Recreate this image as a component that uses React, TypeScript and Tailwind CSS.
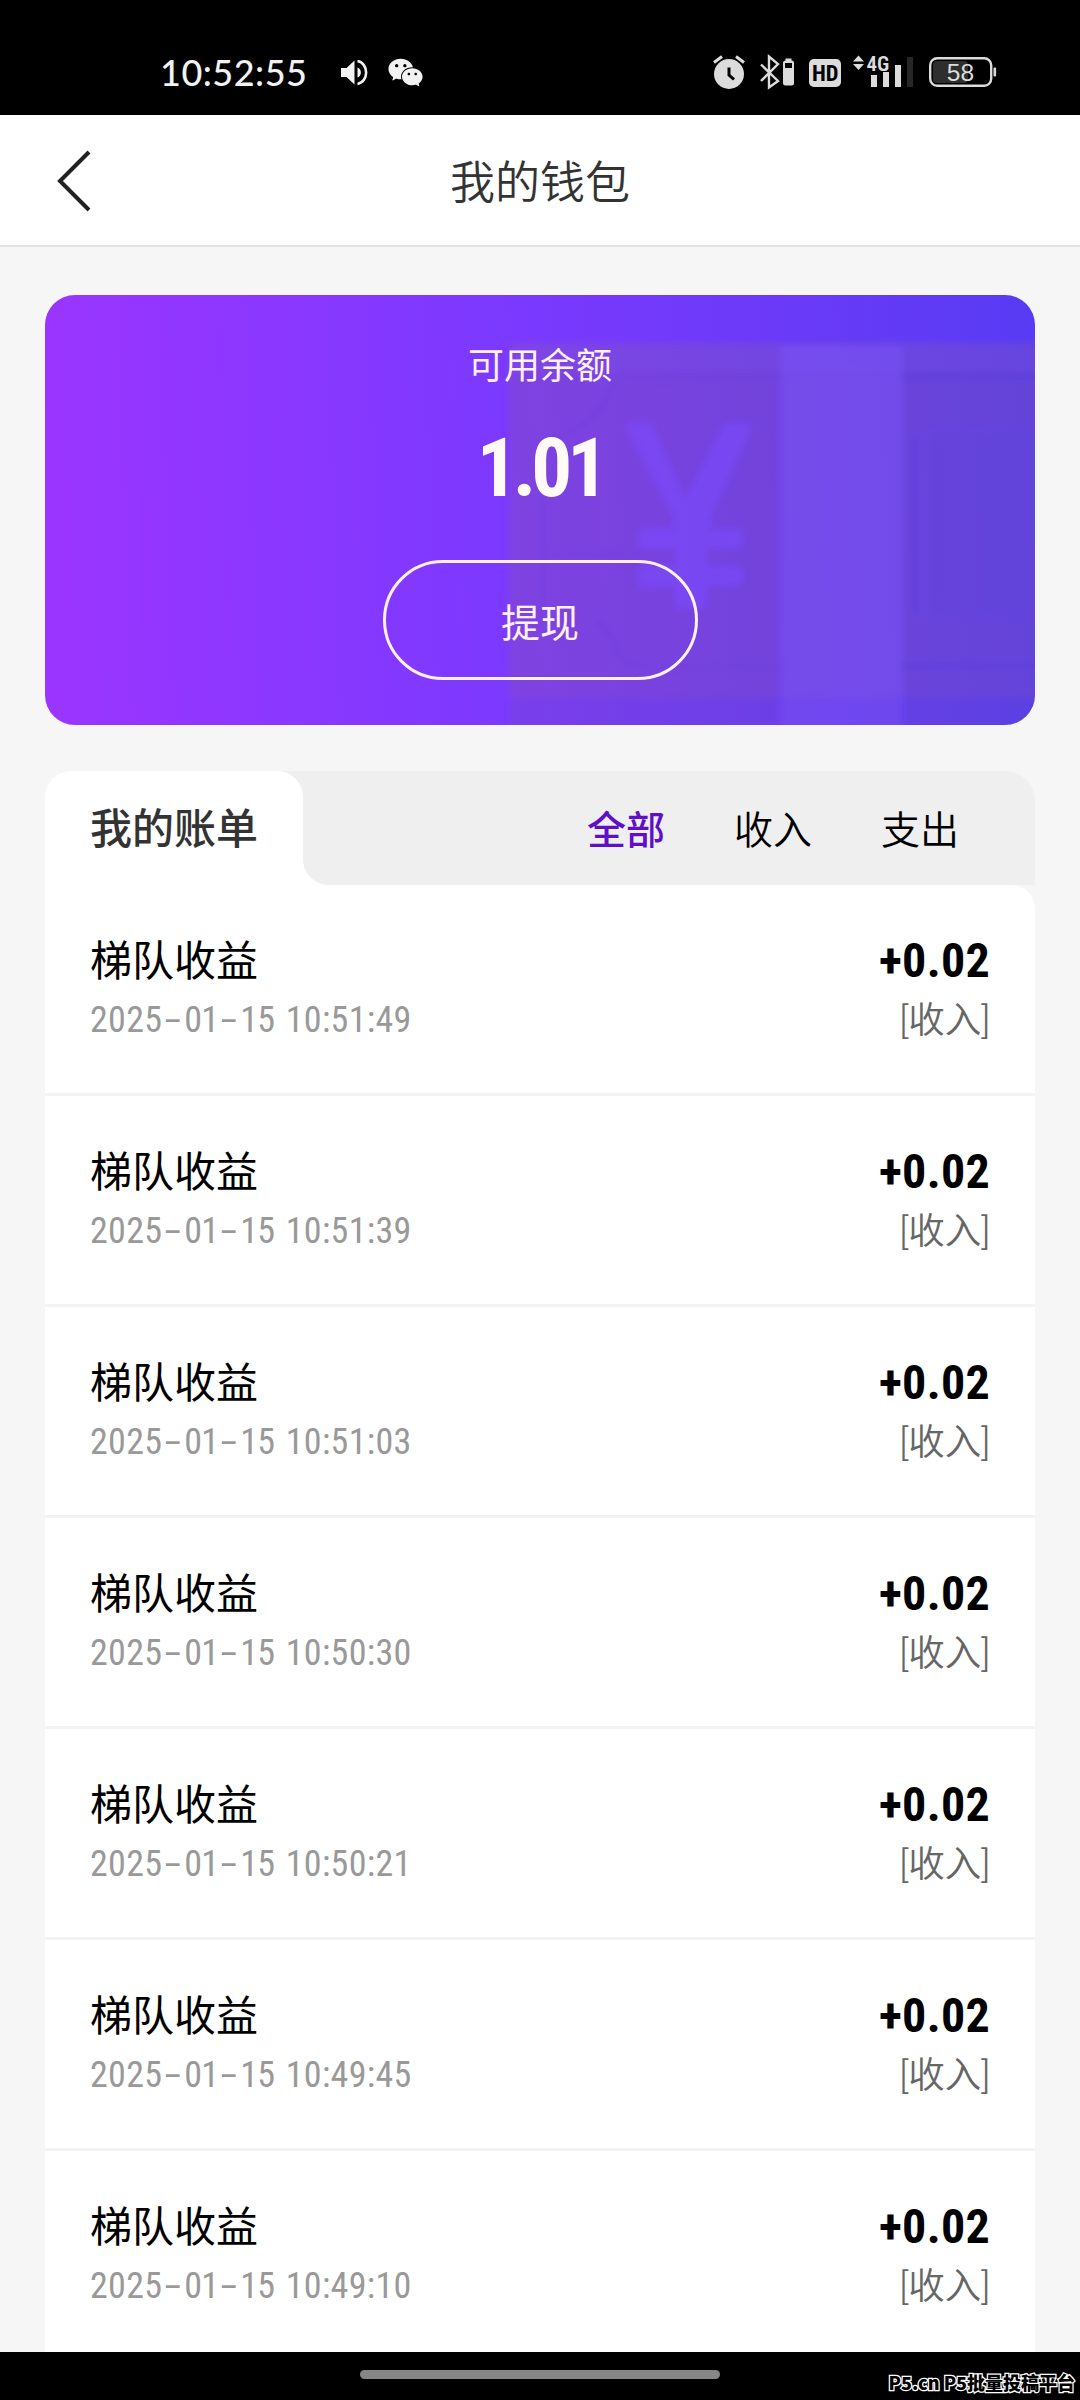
import { AiFillWechat } from "react-icons/ai";

const bills = [
  "2025-01-15 10:51:49",
  "2025-01-15 10:51:39",
  "2025-01-15 10:51:03",
  "2025-01-15 10:50:30",
  "2025-01-15 10:50:21",
  "2025-01-15 10:49:45",
  "2025-01-15 10:49:10",
];

function StatusIcons() {
  return (
    <svg className="mb-[5px] h-[70px] w-[310px] shrink-0" viewBox="0 0 310 70" fill="none">
      {/* alarm */}
      <circle cx="29" cy="34" r="15" fill="#dcdcdc" />
      <path d="M14 22.500l8-6M36 16.500l8 6" stroke="#dcdcdc" strokeWidth="3" />
      <path d="M29 27.500v7.500l5 4.500" stroke="#000" strokeWidth="3" />
      {/* bluetooth with its battery */}
      <path d="M61 24.500L78 41l-9 6.500v-31L78 24 61 41" stroke="#dcdcdc" strokeWidth="2.400" />
      <rect x="83" y="20.500" width="11" height="25" rx="2.500" fill="#dcdcdc" />
      <rect x="85.500" y="18.500" width="6" height="3" fill="#dcdcdc" />
      <rect x="85" y="23" width="7" height="5" fill="#000" />
      {/* HD */}
      <rect x="109" y="19" width="32" height="28" rx="5" fill="#dcdcdc" />
      <text x="125.300" y="41" textAnchor="middle" fill="#000" className="font-['Roboto',sans-serif] text-[22.5px] font-bold [font-stretch:75%]">HD</text>
      {/* mobile signal */}
      <path d="M153 21.500l5.500-6 5.500 6zM153 24h11l-5.500 6z" fill="#dcdcdc" />
      <text x="166.500" y="30.500" fill="#dcdcdc" className="font-['Roboto',sans-serif] text-[21px] font-semibold [font-stretch:75%]">4G</text>
      <path d="M171 35h6v12h-6zM183 32h6v15h-6zM195 25h6v22h-6z" fill="#dcdcdc" />
      <rect x="207" y="17" width="6" height="30" fill="#262626" />
      {/* battery */}
      <rect x="233" y="21" width="35" height="22" rx="4" fill="#2e2e2e" />
      <rect x="230.200" y="18.200" width="61" height="27.600" rx="7" stroke="#dcdcdc" strokeWidth="2.400" />
      <rect x="293.500" y="27.500" width="2.600" height="9" rx="1" fill="#dcdcdc" />
      <text x="260.500" y="41" textAnchor="middle" fill="#dcdcdc" className="font-['Liberation_Sans',sans-serif] text-[24.5px]">58</text>
    </svg>
  );
}

function StatusBar() {
  return (
    <div className="flex h-[115px] shrink-0 items-end bg-black pl-[160px] text-[#f2f2f2]">
      <span className="mb-[25px] w-[181px] font-['Lato',sans-serif] text-[36px] leading-none font-medium tracking-[0.5px]">10:52:55</span>
      <svg className="mb-[29px] h-[27px] w-[27px]" viewBox="0 0 27 27" fill="none">
        <path d="M0 9h5.500L13.500 1.500v24L5.500 18H0z" fill="#f2f2f2" />
        <path d="M16.500 8.500c4.500 1.500 4.500 8.500 0 10z" fill="#f2f2f2" />
        <path d="M16.500 2c11.500 2 11.500 21 0 23" stroke="#f2f2f2" strokeWidth="2.600" />
      </svg>
      <AiFillWechat className="mr-[275px] mb-[23px] ml-[18px] h-[39px] w-[39px] shrink-0" />
      <StatusIcons />
    </div>
  );
}

function BanknoteArt() {
  return (
    <svg className="absolute inset-0 h-full w-full" viewBox="0 0 990 430" fill="none">
      <defs>
        <filter id="soft" x="-5%" y="-5%" width="110%" height="110%">
          <feGaussianBlur stdDeviation="3" />
        </filter>
      </defs>
      <g filter="url(#soft)">
        <path d="M464 48H1010V403H464z" fill="#907060" fillOpacity=".18" />
        <path d="M464 403H1010V450H464z" fill="#706070" fillOpacity=".13" />
        <path d="M470 50H1010V76H470z" fill="#7c50ff" fillOpacity=".14" />
        <path d="M736 50H857V450H736z" fill="#7c55ff" fillOpacity=".42" />
        <path d="M736 82H580q-8 0-14 12q-14 32-40 42q-12 8-36 10M498 200V330M505 260H600M736 372H600q-20-2-26-12q-6-22-24-34" stroke="#6a38d4" strokeOpacity=".28" strokeWidth="6" />
        <path d="M857 82H1010M857 371H1010M870 142V318" stroke="#5a3ad8" strokeOpacity=".35" strokeWidth="8" />
        <path d="M882 134H1010V325H882z" fill="#5c42e0" fillOpacity=".22" />
        <path d="M582 130h24l34 78 40-78h26l-42 92v14h32v16h-36v20h36v18h-36v22h-28v-22h-36v-18h36v-20h-36v-16h34v-14z" fill="#7c4aff" fillOpacity=".62" />
      </g>
    </svg>
  );
}

function BalanceCard() {
  return (
    <section className="relative mx-[45px] mt-[48px] h-[430px] shrink-0 overflow-hidden rounded-[30px] bg-linear-[88deg,#9b35ff_0%,#7c39ff_46%,#6c3af8_72%,#583bf4_100%] text-[#fff0fa]">
      <BanknoteArt />
      <div className="relative flex flex-col items-center pt-[52px]">
        <p className="text-[36px] leading-[40px]">可用余额</p>
        <p className="mt-[35px] text-[81px] leading-[94px] font-bold tracking-[-5px] text-[#fffaf5] [font-stretch:75%]">1.01</p>
        <button className="mt-[44px] h-[120px] w-[315px] rounded-full border-[3px] border-[#fff0fa] pt-[7px] text-[39px] leading-[40px]">提现</button>
      </div>
    </section>
  );
}

function BillTabs() {
  return (
    <div className="relative flex h-[114px] shrink-0 rounded-t-[30px] bg-[#efefef]">
      <h2 className="flex w-[258px] items-center rounded-t-[26px] bg-white pt-[4px] pl-[45px] text-[42px] leading-none font-medium text-[#333]">
        我的账单
      </h2>
      <span className="absolute bottom-0 left-[258px] h-[26px] w-[26px] bg-[radial-gradient(circle_at_top_right,transparent_25.5px,white_26.5px)]" />
      <nav className="ml-auto flex items-center gap-[69px] pt-[7px] pr-[76px] text-[39px] leading-none text-black [font-weight:350]">
        <span className="font-medium text-[#5f0fc8]">全部</span>
        <span>收入</span>
        <span>支出</span>
      </nav>
    </div>
  );
}

function Timestamp({ value }: { value: string }) {
  const [date, time] = value.split(" ");
  const [year, month, day] = date.split("-");
  const dash = <span className="inline-block w-[22px] scale-x-[1.9] text-center">-</span>;
  return (
    <p className="mt-[11px] text-[36px] leading-[44px] tracking-[0.3px] text-[#999] [font-stretch:75%] [word-spacing:3px]">
      {year}{dash}
      <span className="tracking-[-0.8px]">{month}</span>{dash}
      <span className="tracking-[-0.8px]">{day}</span> {time}
    </p>
  );
}

function BillRow({ time }: { time: string }) {
  return (
    <li className="flex h-[211px] shrink-0 justify-between border-b-[3px] border-[#f3f3f3] px-[45px] pt-[52px]">
      <div>
        <p className="text-[42px] leading-[50px] text-black [font-weight:370]">梯队收益</p>
        <Timestamp value={time} />
      </div>
      <div className="text-right">
        <p className="mt-[-1px] text-[48px] leading-[50px] font-bold tracking-[0.3px] text-black [font-stretch:75%]">+0.02</p>
        <p className="mt-[13px] text-[36.5px] leading-[44px] text-[#666] [font-weight:350]">[收入]</p>
      </div>
    </li>
  );
}

export default function App() {
  return (
    <div className="relative flex h-[2400px] w-[1080px] flex-col overflow-hidden bg-[#f6f6f6] font-['Roboto','Noto_Sans_CJK_SC',sans-serif]">
      <StatusBar />
      <header className="grid h-[132px] shrink-0 grid-cols-[1fr_auto_1fr] items-center border-b-2 border-[#e4e4e4] bg-white">
        <svg className="mt-[2px] ml-[55px] h-[62px] w-[36px]" viewBox="0 0 36 62" fill="none">
          <path d="M34 2L5 31l29 29" stroke="#222" strokeWidth="4" />
        </svg>
        <h1 className="pt-[6px] text-[45px] leading-none text-[#333] [font-weight:350]">我的钱包</h1>
      </header>
      <BalanceCard />
      <main className="mx-[45px] mt-[46px] flex min-h-0 flex-1 flex-col overflow-hidden">
        <BillTabs />
        <ul className="rounded-tr-[24px] bg-white">
          {bills.map((time) => (
            <BillRow key={time} time={time} />
          ))}
        </ul>
      </main>
      <footer className="flex h-[48px] shrink-0 justify-center bg-black pt-[18px]">
        <span className="h-[9px] w-[360px] rounded-full bg-[#868686]" />
      </footer>
      <span className="absolute right-[5px] bottom-[5px] font-['Noto_Sans_CJK_SC',sans-serif] text-[18px] leading-[26px] font-black text-black [-webkit-text-stroke:2.5px_#fff] [paint-order:stroke]">
        P5.cn P5批量投稿平台
      </span>
    </div>
  );
}
